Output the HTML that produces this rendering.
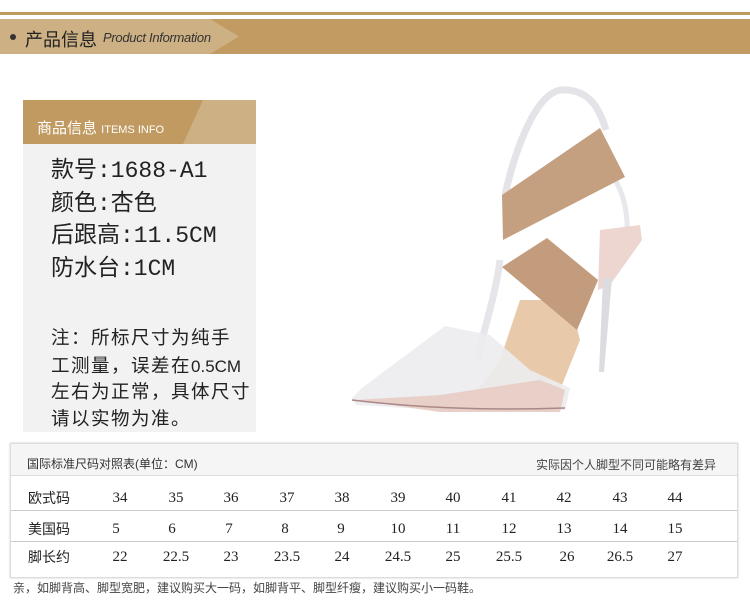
<!DOCTYPE html>
<html><head><meta charset="utf-8"><style>
*{margin:0;padding:0;box-sizing:border-box}
body{width:750px;height:604px;background:#fff;position:relative;overflow:hidden;font-family:"Liberation Sans","Noto Sans CJK SC",sans-serif;color:#222}
.abs{position:absolute}
.mono{font-family:"Liberation Mono","Noto Sans CJK SC",monospace}
.n{font-family:"Liberation Sans",sans-serif;letter-spacing:0;font-size:17px}
.row{position:absolute;left:11px;width:726px;border-bottom:1px solid #ccc;font-size:14px}
.row span{position:absolute;font-family:"Liberation Serif","Noto Serif CJK SC",serif;font-size:15px;transform:translateX(-50%)}
.row b{position:absolute;left:17px;font-weight:normal;font-size:14px;line-height:17px}
.r1 span{top:13px}.r1 b{top:13px}
.r2 span{top:10px}.r2 b{top:10px}
.r3 span{top:7px}.r3 b{top:7px}
</style></head><body>
<div class="abs" style="left:0;top:12px;width:750px;height:3px;background:#c09a60"></div>
<div class="abs" style="left:0;top:19px;width:750px;height:35px;background:#c19b62"></div>
<svg class="abs" style="left:0;top:19px" width="240" height="35"><polygon points="0,0 210,0 239,17.5 210,35 0,35" fill="#cdb083"/></svg>
<div class="abs" style="left:10px;top:34px;width:6px;height:6px;border-radius:50%;background:#333"></div>
<div class="abs" style="left:25px;top:26px;font-size:18px;color:#222">产品信息</div>
<div class="abs" style="left:103px;top:30px;font-size:13px;font-style:italic;color:#333;letter-spacing:-0.3px">Product Information</div>

<div class="abs" style="left:23px;top:100px;width:233px;height:332px;background:#f2f2f2"></div>
<div class="abs" style="left:23px;top:100px;width:233px;height:44px;background:#c09a60"></div>
<svg class="abs" style="left:23px;top:100px" width="233" height="44"><polygon points="180,0 233,0 233,44 160,44" fill="#cdb083"/></svg>
<div class="abs" style="left:37px;top:117px;font-size:15px;color:#fff">商品信息 <span style="font-size:11px">ITEMS INFO</span></div>
<div class="abs mono" style="left:51px;top:155px;font-size:23px;line-height:32.5px;color:#222">款号:1688-A1<br>颜色:杏色<br>后跟高:11.5CM<br>防水台:1CM</div>
<div class="abs mono" style="left:51px;top:327px;font-size:18.5px;line-height:26.5px;color:#222;letter-spacing:1.5px">注：所标尺寸为纯手<br>工测量，误差在<span class="n">0.5CM</span><br>左右为正常，具体尺寸<br>请以实物为准。</div>

<svg class="abs" style="left:330px;top:80px" width="330" height="340" viewBox="330 80 330 340">
<path d="M505,195 C515,150 535,95 560,90 C590,88 600,110 606,130" fill="none" stroke="#e4e4e8" stroke-width="7"/>
<path d="M615,180 C628,200 632,240 620,260" fill="none" stroke="#e8e8ec" stroke-width="5"/>
<polygon points="600,230 640,225 642,240 610,285 598,290" fill="#ecd6cf"/>
<polygon points="603,278 612,278 604,372 599,372" fill="#dcdce0"/>
<path d="M500,260 C495,300 480,340 478,360" fill="none" stroke="#e6e6ea" stroke-width="7"/>
<polygon points="520,300 570,300 580,340 560,390 470,400 500,360" fill="#e8c9a9"/>
<polygon points="502,195 600,128 625,177 503,240" fill="#c49f80"/>
<polygon points="502,267 547,238 598,280 577,330" fill="#c29c7c"/>
<polygon points="352,398 362,388 445,326 490,335 530,370 570,388 565,410 440,410 356,405" fill="#ececf0" opacity="0.9"/>
<polygon points="355,400 440,395 540,380 565,390 560,412 440,412" fill="#e8cfc8"/>
<path d="M352,400 Q450,412 565,408" fill="none" stroke="#a88" stroke-width="1.5"/>
</svg>

<div class="abs" style="left:10px;top:443px;width:728px;height:135px;border:1px solid #ddd;box-shadow:0 0 2px #ccc"></div>
<div class="abs" style="left:11px;top:444px;width:726px;height:32px;background:#f5f5f5;border-bottom:1px solid #ddd"></div>
<div class="abs" style="left:27px;top:455px;font-size:12px;color:#333">国际标准尺码对照表(单位：CM)</div>
<div class="abs" style="right:34px;top:456px;font-size:12px;color:#444">实际因个人脚型不同可能略有差异</div>
<div class="row r1" style="top:477px;height:34px"><b>欧式码</b><span style="left:109px">34</span><span style="left:165px">35</span><span style="left:220px">36</span><span style="left:276px">37</span><span style="left:331px">38</span><span style="left:387px">39</span><span style="left:442px">40</span><span style="left:498px">41</span><span style="left:553px">42</span><span style="left:609px">43</span><span style="left:664px">44</span></div>
<div class="row r2" style="top:511px;height:31px"><b>美国码</b><span style="left:105px">5</span><span style="left:161px">6</span><span style="left:218px">7</span><span style="left:274px">8</span><span style="left:330px">9</span><span style="left:387px">10</span><span style="left:442px">11</span><span style="left:498px">12</span><span style="left:553px">13</span><span style="left:609px">14</span><span style="left:664px">15</span></div>
<div class="row r3" style="top:542px;height:34px;border-bottom:none"><b>脚长约</b><span style="left:109px">22</span><span style="left:165px">22.5</span><span style="left:220px">23</span><span style="left:276px">23.5</span><span style="left:331px">24</span><span style="left:387px">24.5</span><span style="left:442px">25</span><span style="left:498px">25.5</span><span style="left:556px">26</span><span style="left:609px">26.5</span><span style="left:664px">27</span></div>
<div class="abs" style="left:13px;top:579px;font-size:12px;color:#444">亲，如脚背高、脚型宽肥，建议购买大一码，如脚背平、脚型纤瘦，建议购买小一码鞋。</div>
</body></html>
